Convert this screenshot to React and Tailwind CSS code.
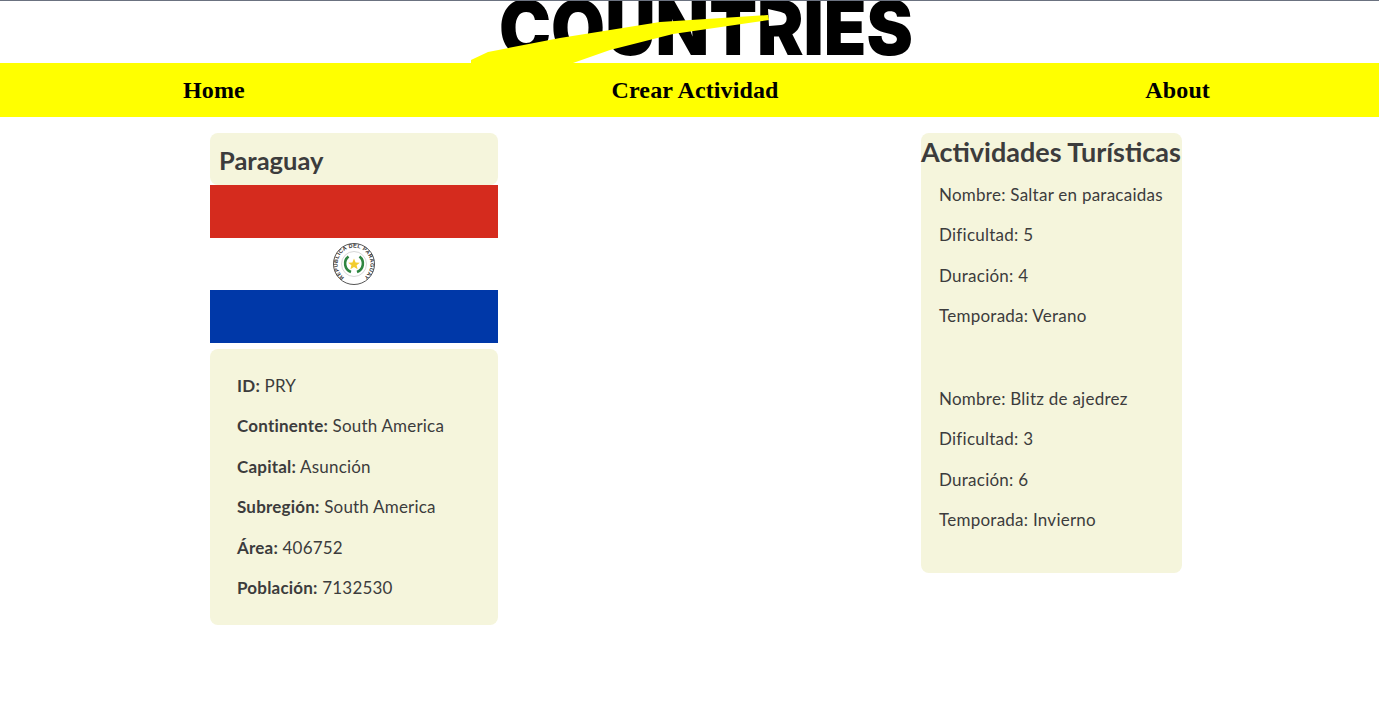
const font = "font-['Lato','Open_Sans',sans-serif]";

function Logo() {
  return (
    <svg width="460" height="62" viewBox="0 0 460 62" className="block">
      <text x="39" y="54" textLength="414" lengthAdjust="spacingAndGlyphs" fontFamily="Inter, sans-serif" fontWeight="900" fontSize="75" fill="#000">COUNTRIES</text>
      <path d="M308 8 L321 11 L324 18 L321 24 L309 25 Z" fill="#fff" />
      <path d="M11 62 L11 59 L28 51 L100 37 L200 21 L308 14 L309 19 L213 33 L150 49 L113 62 Z" fill="#ffff00" />
    </svg>
  );
}

function Seal() {
  return (
    <svg width="44" height="44" viewBox="0 0 44 44">
      <circle cx="22" cy="22" r="20.5" fill="#fff" stroke="#555" strokeWidth="1" />
      <circle cx="22" cy="22" r="12.5" fill="none" stroke="#bbb" strokeWidth="0.6" />
      <defs>
        <path id="sealArc" d="M22 38.5 a16.5 16.5 0 1 1 0 -33 a16.5 16.5 0 1 1 0 33" />
      </defs>
      <text fontSize="5.4" fontFamily="'Liberation Sans', sans-serif" fontWeight="700" fill="#333">
        <textPath href="#sealArc" startOffset="10%" textLength="82">REPUBLICA DEL PARAGUAY</textPath>
      </text>
      <path d="M16.5 14.5 A9 9 0 0 0 19 30 M27.5 14.5 A9 9 0 0 1 25 30" fill="none" stroke="#2e8540" strokeWidth="2.6" />
      <path d="M22 16.5 L23.6 20.4 L27.8 20.7 L24.6 23.3 L25.6 27.3 L22 25.1 L18.4 27.3 L19.4 23.3 L16.2 20.7 L20.4 20.4 Z" fill="#f2cc2e" />
    </svg>
  );
}

function Field({ label, value }) {
  return (
    <p className="h-[40.5px] leading-[40px] text-[17px] tracking-[0.2px] whitespace-nowrap">
      <b>{label}:</b> {value}
    </p>
  );
}

function Line({ children }) {
  return <p className="h-[40.5px] leading-[40px] text-[17px] tracking-[0.25px] whitespace-nowrap">{children}</p>;
}

export default function App() {
  return (
    <div className="min-h-[724px] bg-white">
      <header className="h-[63px] border-t border-[#6b7280] overflow-hidden flex justify-center">
        <div className="w-[460px] ml-[1px]"><Logo /></div>
      </header>
      <nav className="h-[54px] bg-[#ffff00] flex items-center justify-between pl-[183px] pr-[169px] font-['Liberation_Serif',serif] font-bold text-[24px] text-black tracking-[0.13px]">
        <span>Home</span>
        <span>Crear Actividad</span>
        <span>About</span>
      </nav>
      <main className={`flex justify-between items-start pt-4 pl-[210px] pr-[197px] text-[#3c3c3c] ${font}`}>
        <section className="w-[288px]">
          <h2 className="h-[52px] pl-[9px] pt-[7px] leading-[40px] rounded-lg bg-[#f5f5dc] text-[25.5px] font-bold">Paraguay</h2>
          <div className="h-[158px] flex flex-col">
            <div className="h-[53px] bg-[#d52b1e]" />
            <div className="h-[52px] bg-white flex items-center justify-center"><Seal /></div>
            <div className="h-[53px] bg-[#0038a8]" />
          </div>
          <div className="mt-[6px] h-[276px] rounded-lg bg-[#f5f5dc] pl-[27px] pt-[16.5px]">
            <Field label="ID" value="PRY" />
            <Field label="Continente" value="South America" />
            <Field label="Capital" value="Asunción" />
            <Field label="Subregión" value="South America" />
            <Field label="Área" value="406752" />
            <Field label="Población" value="7132530" />
          </div>
        </section>
        <section className="w-[261px] h-[440px] rounded-lg bg-[#f5f5dc]">
          <h2 className="h-[37px] leading-[37px] text-[27px] font-bold whitespace-nowrap">Actividades Turísticas</h2>
          <div className="pl-[18px] pt-[4.75px]">
            <Line>Nombre: Saltar en paracaidas</Line>
            <Line>Dificultad: 5</Line>
            <Line>Duración: 4</Line>
            <Line>Temporada: Verano</Line>
            <div className="h-[42px]" />
            <Line>Nombre: Blitz de ajedrez</Line>
            <Line>Dificultad: 3</Line>
            <Line>Duración: 6</Line>
            <Line>Temporada: Invierno</Line>
          </div>
        </section>
      </main>
    </div>
  );
}
